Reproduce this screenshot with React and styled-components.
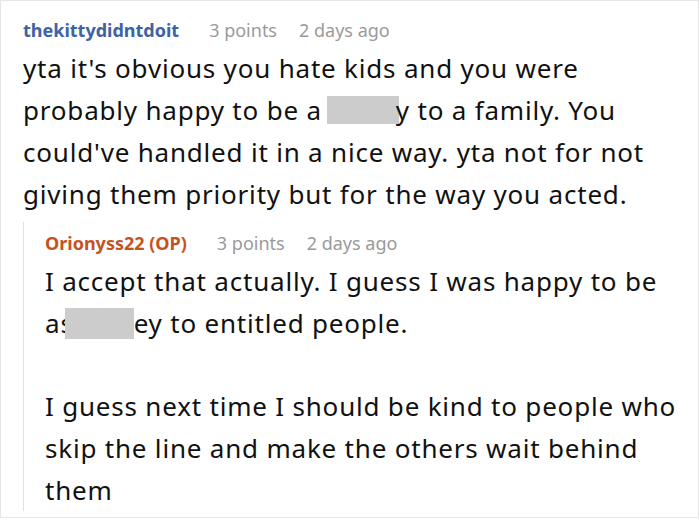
import React from 'react'
import styled, { createGlobalStyle } from 'styled-components'

const GlobalStyle = createGlobalStyle`
  body {
    margin: 0;
    background: #fff;
    font-family: "Noto Sans", "Open Sans", sans-serif;
  }
`

const Card = styled.div`
  box-sizing: border-box;
  width: 699px;
  height: 518px;
  border: 1px solid #e6e6e6;
  background: #fff;
  padding: 18px 0 0 22px;
  overflow: hidden;
`

const Meta = styled.div`
  display: flex;
  align-items: baseline;
  gap: 22px;
  margin-bottom: 6px;
  font-size: 18px;
  line-height: 22px;
  color: #9a9a9a;
`

const Author = styled.span`
  font-weight: 700;
  color: ${(p) => (p.op ? '#c5531f' : '#3d62a6')};
  margin-right: 8px;
`

const Body = styled.p`
  margin: 0;
  font-size: 26px;
  letter-spacing: 0.8px;
  line-height: 42px;
  color: #111;
`

const Gap = styled.div`
  height: 41px;
`

const Reply = styled.div`
  margin-top: 7px;
  border-left: 1px solid #e2e2e2;
  padding: 10px 0 0 21px;
`

const Redacted = styled.span`
  display: inline-block;
  width: ${(p) => p.w}px;
  height: ${(p) => p.h}px;
  margin-left: ${(p) => p.ml || 0}px;
  margin-right: ${(p) => p.mr || 0}px;
  background: #cccccc;
  vertical-align: ${(p) => p.va}px;
`

export default function App() {
  return (
    <>
      <GlobalStyle />
      <Card>
        <Meta>
          <Author>thekittydidntdoit</Author>
          <span>3 points</span>
          <span>2 days ago</span>
        </Meta>
        <Body>
          yta it's obvious you hate kids and you were
          <br />
          probably happy to be a
          <Redacted w={72} h={28} va={-4} ml={5} mr={-3} />
          y to a family. You
          <br />
          could've handled it in a nice way. yta not for not
          <br />
          giving them priority but for the way you acted.
        </Body>
        <Reply>
          <Meta>
            <Author op>Orionyss22 (OP)</Author>
            <span>3 points</span>
            <span>2 days ago</span>
          </Meta>
          <Body>
            I accept that actually. I guess I was happy to be
            <br />
            as
            <Redacted w={69} h={31} va={-6} ml={-9} mr={0} />
            ey to entitled people.
          </Body>
          <Gap />
          <Body>
            I guess next time I should be kind to people who
            <br />
            skip the line and make the others wait behind
            <br />
            them
          </Body>
        </Reply>
      </Card>
    </>
  )
}
